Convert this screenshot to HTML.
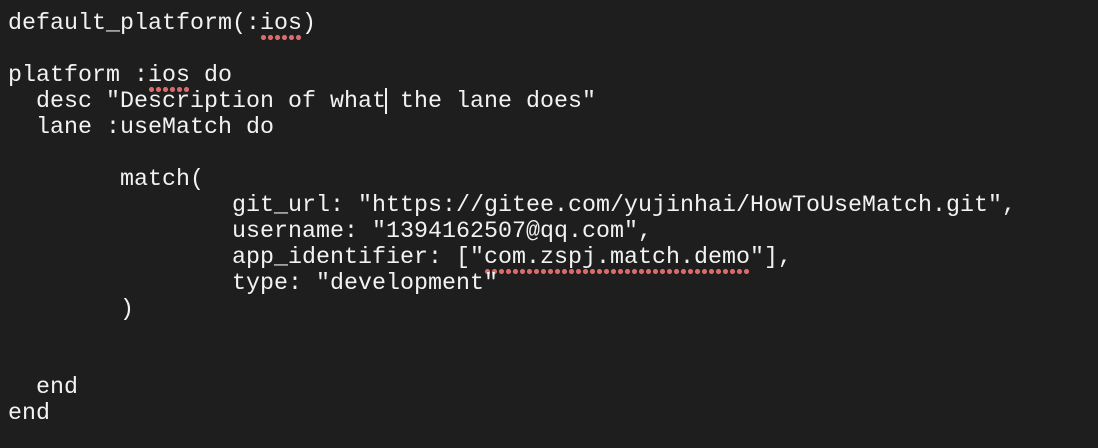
<!DOCTYPE html>
<html><head><meta charset="utf-8"><style>
html,body{margin:0;padding:0;background:#1e1e1e;width:1098px;height:448px;overflow:hidden}
pre{margin:0;position:absolute;left:8px;top:10px;font-family:"Liberation Mono",monospace;font-size:23.3px;line-height:26px;color:#f2f2f2;letter-spacing:0.02px}
.sq{background-image:radial-gradient(circle at 3.5px 2.5px,#d96b6b 2.3px,transparent 2.8px);background-size:7px 5px;background-repeat:repeat-x;background-position:0 100%;padding-bottom:4px}
.cur{display:inline-block;width:2px;height:26px;background:#f2f2f2;vertical-align:top;margin:0 -1px}
</style></head><body>
<pre>default_platform(:<span class="sq">ios</span>)

platform :<span class="sq">ios</span> do
  desc "Description of what<span class="cur"></span> the lane does"
  lane :useMatch do

        match(
                git_url: "https://gitee.com/yujinhai/HowToUseMatch.git",
                username: "1394162507@qq.com",
                app_identifier: ["<span class="sq">com.zspj.match.demo</span>"],
                type: "development"
        )


  end
end</pre>
</body></html>
